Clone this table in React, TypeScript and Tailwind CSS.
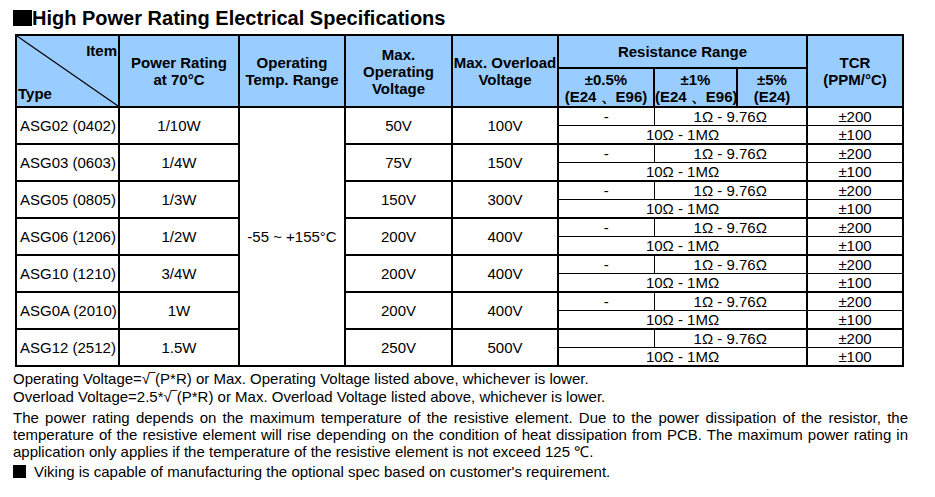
import React from 'react';

const groups = [
  { type: 'ASG02 (0402)', power: '1/10W', op: '50V', over: '100V', dash: true },
  { type: 'ASG03 (0603)', power: '1/4W', op: '75V', over: '150V', dash: true },
  { type: 'ASG05 (0805)', power: '1/3W', op: '150V', over: '300V', dash: true },
  { type: 'ASG06 (1206)', power: '1/2W', op: '200V', over: '400V', dash: true },
  { type: 'ASG10 (1210)', power: '3/4W', op: '200V', over: '400V', dash: true },
  { type: 'ASG0A (2010)', power: '1W', op: '200V', over: '400V', dash: true },
  { type: 'ASG12 (2512)', power: '1.5W', op: '250V', over: '500V', dash: false },
];

const thick = 'border-2 border-black';
const head = `${thick} bg-[#99ccff] font-bold text-center align-middle leading-[17px]`;
const body = `${thick} text-center align-middle`;

export default function App() {
  return (
    <div className="w-[935px] h-[497px] bg-white text-black font-['Liberation_Sans',Arial,sans-serif] pl-[13px] pr-[27px] pt-[6px]">
      <h1 className="flex items-center text-[20px] font-bold leading-[24px]">
        <span className="inline-block w-[19px] h-[16px] bg-black" />
        High Power Rating Electrical Specifications
      </h1>

      <table className="ml-[2px] mt-[4px] w-[888px] table-fixed border-collapse text-[15px] leading-[17px]">
        <colgroup>
          <col className="w-[103px]" />
          <col className="w-[120px]" />
          <col className="w-[106px]" />
          <col className="w-[107px]" />
          <col className="w-[106px]" />
          <col className="w-[96px]" />
          <col className="w-[83px]" />
          <col className="w-[70px]" />
          <col className="w-[96px]" />
        </colgroup>
        <thead>
          <tr className="h-[33px]">
            <th rowSpan={2} className={`${thick} bg-[#99ccff] font-bold relative p-0`}>
              <svg className="absolute inset-0 w-full h-full" preserveAspectRatio="none" viewBox="0 0 100 100">
                <line x1="0" y1="0" x2="100" y2="100" stroke="black" strokeWidth="1.2" vectorEffect="non-scaling-stroke" />
              </svg>
              <div className="relative flex flex-col h-[70px] justify-between px-[1px] pt-[6px] pb-[4px]">
                <span className="self-end">Item</span>
                <span className="self-start">Type</span>
              </div>
            </th>
            <th rowSpan={2} className={head}>Power Rating<br />at 70°C</th>
            <th rowSpan={2} className={head}>Operating<br />Temp. Range</th>
            <th rowSpan={2} className={head}>Max.<br />Operating<br />Voltage</th>
            <th rowSpan={2} className={`${head} whitespace-nowrap`}>Max. Overload<br />Voltage</th>
            <th colSpan={3} className={head}>Resistance Range</th>
            <th rowSpan={2} className={head}>TCR<br />(PPM/°C)</th>
          </tr>
          <tr className="h-[38px]">
            <th className={head}>±0.5%<br />(E24 、E96)</th>
            <th className={`${head} whitespace-nowrap`}>±1%<br />(E24 、E96)</th>
            <th className={head}>±5%<br />(E24)</th>
          </tr>
        </thead>
        <tbody className="font-normal">
          {groups.map((g, i) => (
            <React.Fragment key={g.type}>
              <tr className="h-[18px]">
                <td rowSpan={2} className={`${thick} text-left pl-[3px] align-middle whitespace-nowrap`}>{g.type}</td>
                <td rowSpan={2} className={body}>{g.power}</td>
                {i === 0 && (
                  <td rowSpan={14} className={body}>-55 ~ +155°C</td>
                )}
                <td rowSpan={2} className={body}>{g.op}</td>
                <td rowSpan={2} className={body}>{g.over}</td>
                <td className="border border-black border-l-2 text-center p-0">{g.dash ? '-' : ''}</td>
                <td colSpan={2} className="border border-black text-center p-0">1Ω - 9.76Ω</td>
                <td className="border border-black border-x-2 text-center p-0">±200</td>
              </tr>
              <tr className="h-[18px]">
                <td colSpan={3} className="border border-black border-l-2 border-b-2 text-center p-0">10Ω - 1MΩ</td>
                <td className="border border-black border-x-2 border-b-2 text-center p-0">±100</td>
              </tr>
            </React.Fragment>
          ))}
        </tbody>
      </table>

      <div className="text-[15px] leading-[17px] mt-[3px]">
        <p>Operating Voltage=√‾(P*R) or Max. Operating Voltage listed above, whichever is lower.</p>
        <p className="mt-[1px]">Overload Voltage=2.5*√‾(P*R) or Max. Overload Voltage listed above, whichever is lower.</p>
        <p className="mt-[4px] text-justify">
          The power rating depends on the maximum temperature of the resistive element. Due to the power dissipation of the resistor, the temperature of the resistive element will rise depending on the condition of heat dissipation from PCB. The maximum power rating in application only applies if the temperature of the resistive element is not exceed 125 ℃.
        </p>
        <p className="mt-[3px] flex items-center">
          <span className="inline-block w-[13px] h-[13px] bg-black mr-[8px]" />
          Viking is capable of manufacturing the optional spec based on customer's requirement.
        </p>
      </div>
    </div>
  );
}
